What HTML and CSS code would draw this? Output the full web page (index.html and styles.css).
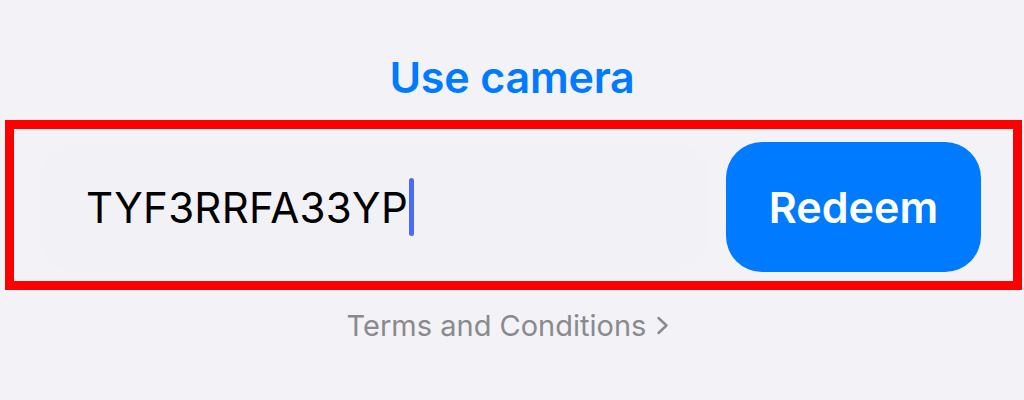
FILE: index.html
```html
<!DOCTYPE html>
<html lang="en">
<head>
    <meta charset="UTF-8">
    <meta name="viewport" content="width=device-width, initial-scale=1.0">
    <title>Redeem Code</title>
    <link rel="stylesheet" href="styles.css">
</head>
<body>
    <div class="redeem-page">
        <h1 class="camera-link">Use camera</h1>
        <div class="redeem-box">
            <div class="code-field">
                <span class="code-text">TYF3RRFA33YP</span><span class="caret"></span>
            </div>
            <button class="redeem-btn" type="button">Redeem</button>
        </div>
        <a class="terms" href="#">
            Terms and Conditions
            <svg class="chevron" width="13" height="19" viewBox="0 0 13 19">
                <path d="M2.5 2 L10.5 9.5 L2.5 17" fill="none" stroke="#8a8a8e" stroke-width="2.4" stroke-linecap="round" stroke-linejoin="round"/>
            </svg>
        </a>
    </div>
</body>
</html>
```

FILE: styles.css
```css
* {
    margin: 0;
    padding: 0;
    box-sizing: border-box;
}

body {
    font-family: Inter, 'Liberation Sans', sans-serif;
    background-color: #f2f2f7;
    color: #000;
    width: 1024px;
    height: 400px;
    overflow: hidden;
}

.redeem-page {
    display: flex;
    flex-direction: column;
    padding-top: 56px;
}

.camera-link {
    text-align: center;
    font-size: 43px;
    line-height: 42px;
    font-weight: 600;
    color: #007aff;
    letter-spacing: -0.2px;
}

.redeem-box {
    margin: 22px 2px 0 5px;
    height: 170px;
    border: 9px solid #ff0000;
    display: flex;
    gap: 17px;
    padding: 13px 32px 9px 26px;
}

.code-field {
    flex: 1;
    display: flex;
    align-items: center;
    padding-left: 46px;
    border-radius: 36px;
    background: #f1f1f6;
}

.code-text {
    font-size: 42px;
    letter-spacing: 0.3px;
    color: #000;
}

.caret {
    width: 5px;
    height: 58px;
    border-radius: 2.5px;
    background: #4a6cf0;
    margin-left: 1px;
}

.redeem-btn {
    width: 255px;
    border: none;
    border-radius: 36px;
    background: #007aff;
    color: #fff;
    font-family: Inter, 'Liberation Sans', sans-serif;
    font-size: 43px;
    font-weight: 600;
    cursor: pointer;
}

.terms {
    align-self: center;
    margin-top: 21px;
    margin-left: -8px;
    display: flex;
    align-items: center;
    gap: 10px;
    font-size: 29px;
    line-height: 29px;
    color: #8a8a8e;
    text-decoration: none;
}
```
